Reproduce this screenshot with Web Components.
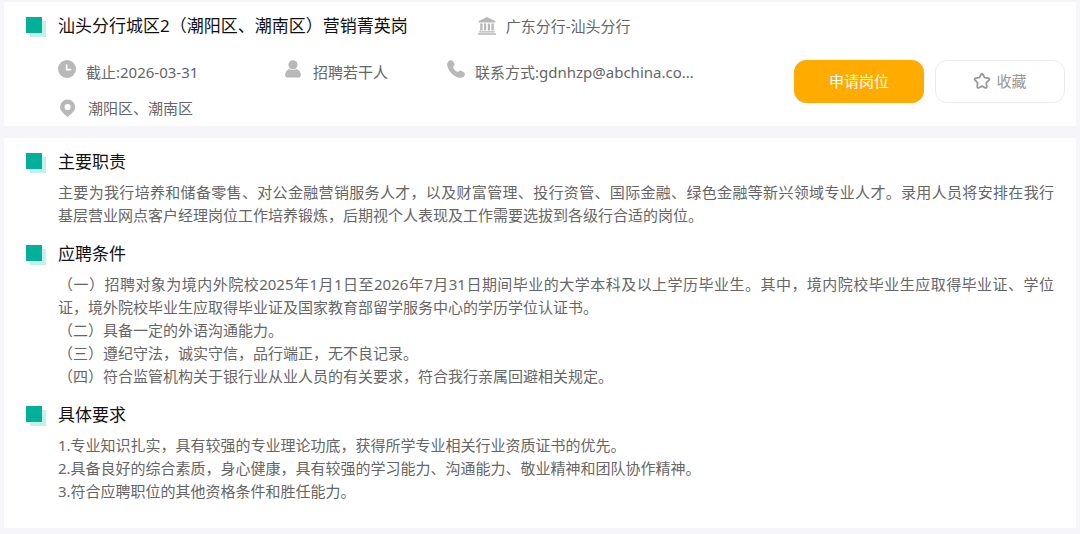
<!DOCTYPE html>
<html lang="zh-CN">
<head>
<meta charset="utf-8">
<meta name="viewport" content="width=device-width, initial-scale=1">
<title>汕头分行城区2（潮阳区、潮南区）营销菁英岗</title>
<style>
  body {
    margin: 0;
    background: #f5f5fa;
    font: 15px/23px "Noto Sans", "Noto Sans CJK SC", sans-serif;
    font-weight: 400;
    color: #666;
    text-spacing-trim: space-all;
  }
</style>
</head>
<body>
<job-page></job-page>

<script>
const define = (name, html, setup) => {
  const template = document.createElement('template');
  template.innerHTML = html;
  customElements.define(name, class extends HTMLElement {
    constructor() {
      super();
      this.attachShadow({ mode: 'open' }).append(template.content.cloneNode(true));
    }
    connectedCallback() { if (setup) setup(this); }
  });
};

const icons = {
  clock: '<circle cx="9" cy="9" r="9"/><path d="M8.6 4.6V9.6H13.2" fill="none" stroke="#fff" stroke-width="1.6"/>',
  person: '<circle cx="8" cy="4.8" r="4.6"/><path d="M.2 15.2C.2 11.2 3 9 5 9.3C7 10.4 9 10.4 11 9.3C13 9 15.8 11.2 15.8 15.2Q15.8 17.6 13.2 17.6H2.800Q.2 17.6 .2 15.2Z"/>',
  phone: '<path d="M1.2 1.5C2.6-.2 5.2-.1 6.4 1.7L7.3 3.5C7.9 4.9 7.2 6 6 7C6.500 9.300 8.700 11.500 11 12C12 10.800 13.200 10.300 14.500 10.900L16.400 11.900C18.200 13 18.300 15.400 16.700 16.700C15.300 17.900 13.200 18.200 11 17.500C5.800 15.700 2 11.800.5 6.800C0 4.700.1 2.900 1.200 1.500Z"/>',
  pin: '<path fill-rule="evenodd" d="M7.6 0.400a7.600 7.600 0 0 1 7.600 7.600c0 3.900-4 6.800-7.600 10C4 14.800 0 11.900 0 8A7.600 7.600 0 0 1 7.600 .4ZM7.600 4.900a3.100 3.100 0 1 0 0 6.200a3.100 3.100 0 1 0 0-6.200Z"/>',
  bank: '<path d="M9 0L17.300 4V5.500H.7V4ZM2.200 6.500H4.600V13.500H2.200ZM6 6.500H8.200V13.500H6ZM9.800 6.500H12V13.500H9.800ZM13.400 6.500H15.800V13.500H13.400ZM1.300 14.200H16.700V15.500H1.300ZM0 16.200H18V17.800H0Z"/>',
  star: '<path d="M8 2.500Q9 .8 10 2.500L11.500 5.600L15.200 6.200Q17.300 6.700 15.900 8.200L13.300 10.900L13.800 14.400Q13.900 16.500 12.100 15.700L9 14.100L5.900 15.700Q4.100 16.500 4.200 14.400L4.700 10.900L2.100 8.200Q.7 6.700 2.800 6.200L6.500 5.600Z" fill="none" stroke="#999" stroke-width="1.800" stroke-linejoin="round"/>'
};

define('ui-icon', `
  <style>
    :host { display: block; flex: none; width: 18px; height: 18px; }
    svg { display: block; width: 100%; height: 100%; fill: #b8b8b8; }
  </style>
  <svg viewBox="0 0 18 18" aria-hidden="true"></svg>`,
  el => { el.shadowRoot.querySelector('svg').innerHTML = icons[el.getAttribute('name')] || ''; });

define('section-title', `
  <style>
    :host { display: flex; align-items: center; gap: 16px; }
    i { flex: none; width: 16px; height: 16px; margin-bottom: 2px; background: #00b09b; box-shadow: 4px 4px 0 #c5f0e8; }
    h2 { margin: 0; font-size: 17px; line-height: 28px; font-weight: 400; color: #111; }
  </style>
  <i></i><h2><slot></slot></h2>`);

define('meta-item', `
  <style>
    :host { display: flex; align-items: center; gap: 10px; white-space: nowrap; }
    :host([raised]) ui-icon { padding-bottom: 6px; }
  </style>
  <ui-icon></ui-icon><span><slot></slot></span>`,
  el => {
    const icon = document.createElement('ui-icon');
    icon.setAttribute('name', el.getAttribute('icon'));
    el.shadowRoot.querySelector('ui-icon').replaceWith(icon);
  });

define('action-button', `
  <style>
    :host { display: block; }
    button {
      display: flex; align-items: center; justify-content: center; gap: 5px;
      width: 130px; height: 43px; padding: 0; box-sizing: border-box;
      border: 1px solid #ececec; border-radius: 12px; background: #fff;
      color: #999; font: inherit; cursor: pointer;
    }
    :host([primary]) button { background: #ffab00; border-color: #ffab00; color: #fff; }
  </style>
  <button type="button"><slot></slot></button>`);

define('job-header', `
  <style>
    :host { display: flex; justify-content: space-between; align-items: center;
      padding: 10px 11px 0 22px; background: #fff; }
    .top { display: flex; gap: 70px; }
    .meta { display: grid; grid-template-columns: 227px 162px auto; grid-auto-rows: 36px;
      padding: 14px 0 0 32px; }
    .place { padding-left: 2px; }
    .actions { display: flex; gap: 11px; padding-top: 24px; }
  </style>
  <div>
    <div class="top">
      <section-title>汕头分行城区2（潮阳区、潮南区）营销菁英岗</section-title>
      <meta-item icon="bank">广东分行-汕头分行</meta-item>
    </div>
    <div class="meta">
      <meta-item raised icon="clock">截止:2026-03-31</meta-item>
      <meta-item raised icon="person">招聘若干人</meta-item>
      <meta-item raised icon="phone">联系方式:gdnhzp@abchina.co...</meta-item>
      <meta-item class="place" icon="pin">潮阳区、潮南区</meta-item>
    </div>
  </div>
  <div class="actions">
    <action-button primary>申请岗位</action-button>
    <action-button><ui-icon name="star"></ui-icon>收藏</action-button>
  </div>`);

define('job-section', `
  <style>
    :host { display: block; }
    .text { padding: 5px 0 0 32px; }
    ::slotted(p) { margin: 0; }
  </style>
  <section-title><slot name="title"></slot></section-title>
  <div class="text"><slot></slot></div>`);

define('job-page', `
  <style>
    :host { display: flex; flex-direction: column; gap: 12px; padding: 2px 4px 6px; }
    main { display: flex; flex-direction: column; gap: 13px; padding: 10px 22px 25px; background: #fff; }
    .full { display: block; text-align-last: justify; }
  </style>
  <job-header></job-header>
  <main>
    <job-section>
      <span slot="title">主要职责</span>
      <p><span class="full">主要为我行培养和储备零售、对公金融营销服务人才，以及财富管理、投行资管、国际金融、绿色金融等新兴领域专业人才。录用人员将安排在我行</span>基层营业网点客户经理岗位工作培养锻炼，后期视个人表现及工作需要选拔到各级行合适的岗位。</p>
    </job-section>
    <job-section>
      <span slot="title">应聘条件</span>
      <p><span class="full">（一）招聘对象为境内外院校2025年1月1日至2026年7月31日期间毕业的大学本科及以上学历毕业生。其中，境内院校毕业生应取得毕业证、学位</span>证，境外院校毕业生应取得毕业证及国家教育部留学服务中心的学历学位认证书。</p>
      <p>（二）具备一定的外语沟通能力。</p>
      <p>（三）遵纪守法，诚实守信，品行端正，无不良记录。</p>
      <p>（四）符合监管机构关于银行业从业人员的有关要求，符合我行亲属回避相关规定。</p>
    </job-section>
    <job-section>
      <span slot="title">具体要求</span>
      <p>1.专业知识扎实，具有较强的专业理论功底，获得所学专业相关行业资质证书的优先。</p>
      <p>2.具备良好的综合素质，身心健康，具有较强的学习能力、沟通能力、敬业精神和团队协作精神。</p>
      <p>3.符合应聘职位的其他资格条件和胜任能力。</p>
    </job-section>
  </main>`);
</script>
</body>
</html>
